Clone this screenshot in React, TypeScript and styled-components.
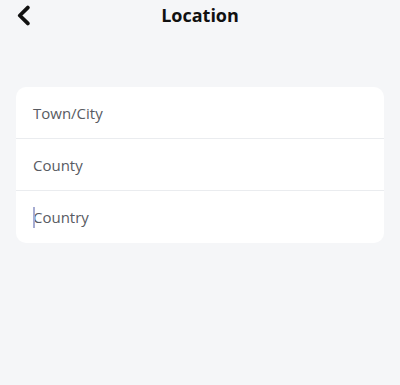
import { createGlobalStyle, styled } from 'styled-components';

const GlobalStyle = createGlobalStyle`
  html, body {
    margin: 0;
    padding: 0;
    background: #f5f6f8;
  }
  body {
    font-family: 'Open Sans', 'Noto Sans', sans-serif;
  }
`;

const fields = ['Town/City', 'County', 'Country'];

const App = () => {
  return (
    <Page>
      <GlobalStyle />
      <Header>
        <BackBtn aria-label="Back">
          <svg width="15" height="21" viewBox="0 0 15 21" fill="none">
            <path
              d="M11.8 2.6L3.8 10.5L11.8 18.4"
              stroke="#111"
              strokeWidth="3.8"
              strokeLinecap="round"
              strokeLinejoin="round"
            />
          </svg>
        </BackBtn>
        <Title>Location</Title>
      </Header>
      <Card>
        {fields.map((label, i) => (
          <Row key={label} $last={i === fields.length - 1}>
            {i === fields.length - 1 && <Caret />}
            <Label>{label}</Label>
          </Row>
        ))}
      </Card>
    </Page>
  );
};

const Page = styled.div`
  width: 400px;
  height: 385px;
  background: #f5f6f8;
  display: flex;
  flex-direction: column;
`;
const Header = styled.header`
  position: relative;
  height: 31px;
  display: flex;
  align-items: center;
  justify-content: center;
`;
const BackBtn = styled.button`
  all: unset;
  position: absolute;
  left: 16px;
  top: 5px;
  width: 15px;
  height: 21px;
  display: flex;
  cursor: pointer;
`;
const Title = styled.h1`
  all: unset;
  font-family: 'Open Sans', sans-serif;
  font-weight: 700;
  font-size: 18px;
  line-height: 31px;
  color: #111;
`;
const Card = styled.div`
  margin: 56px 16px 0 16px;
  background: #ffffff;
  border-radius: 10px;
  overflow: hidden;
  display: flex;
  flex-direction: column;
`;
const Row = styled.div<{ $last: boolean }>`
  position: relative;
  height: 52px;
  display: flex;
  align-items: center;
  padding: 0 17px;
  border-bottom: ${(p) => (p.$last ? 'none' : '1.5px solid #eaecef')};
  box-sizing: border-box;
`;
const Caret = styled.span`
  position: absolute;
  left: 17px;
  top: 16px;
  width: 2px;
  height: 21px;
  background: #a6acd2;
`;
const Label = styled.span`
  font-family: 'Open Sans', sans-serif;
  font-size: 15px;
  color: #585b62;
`;

export default App;
